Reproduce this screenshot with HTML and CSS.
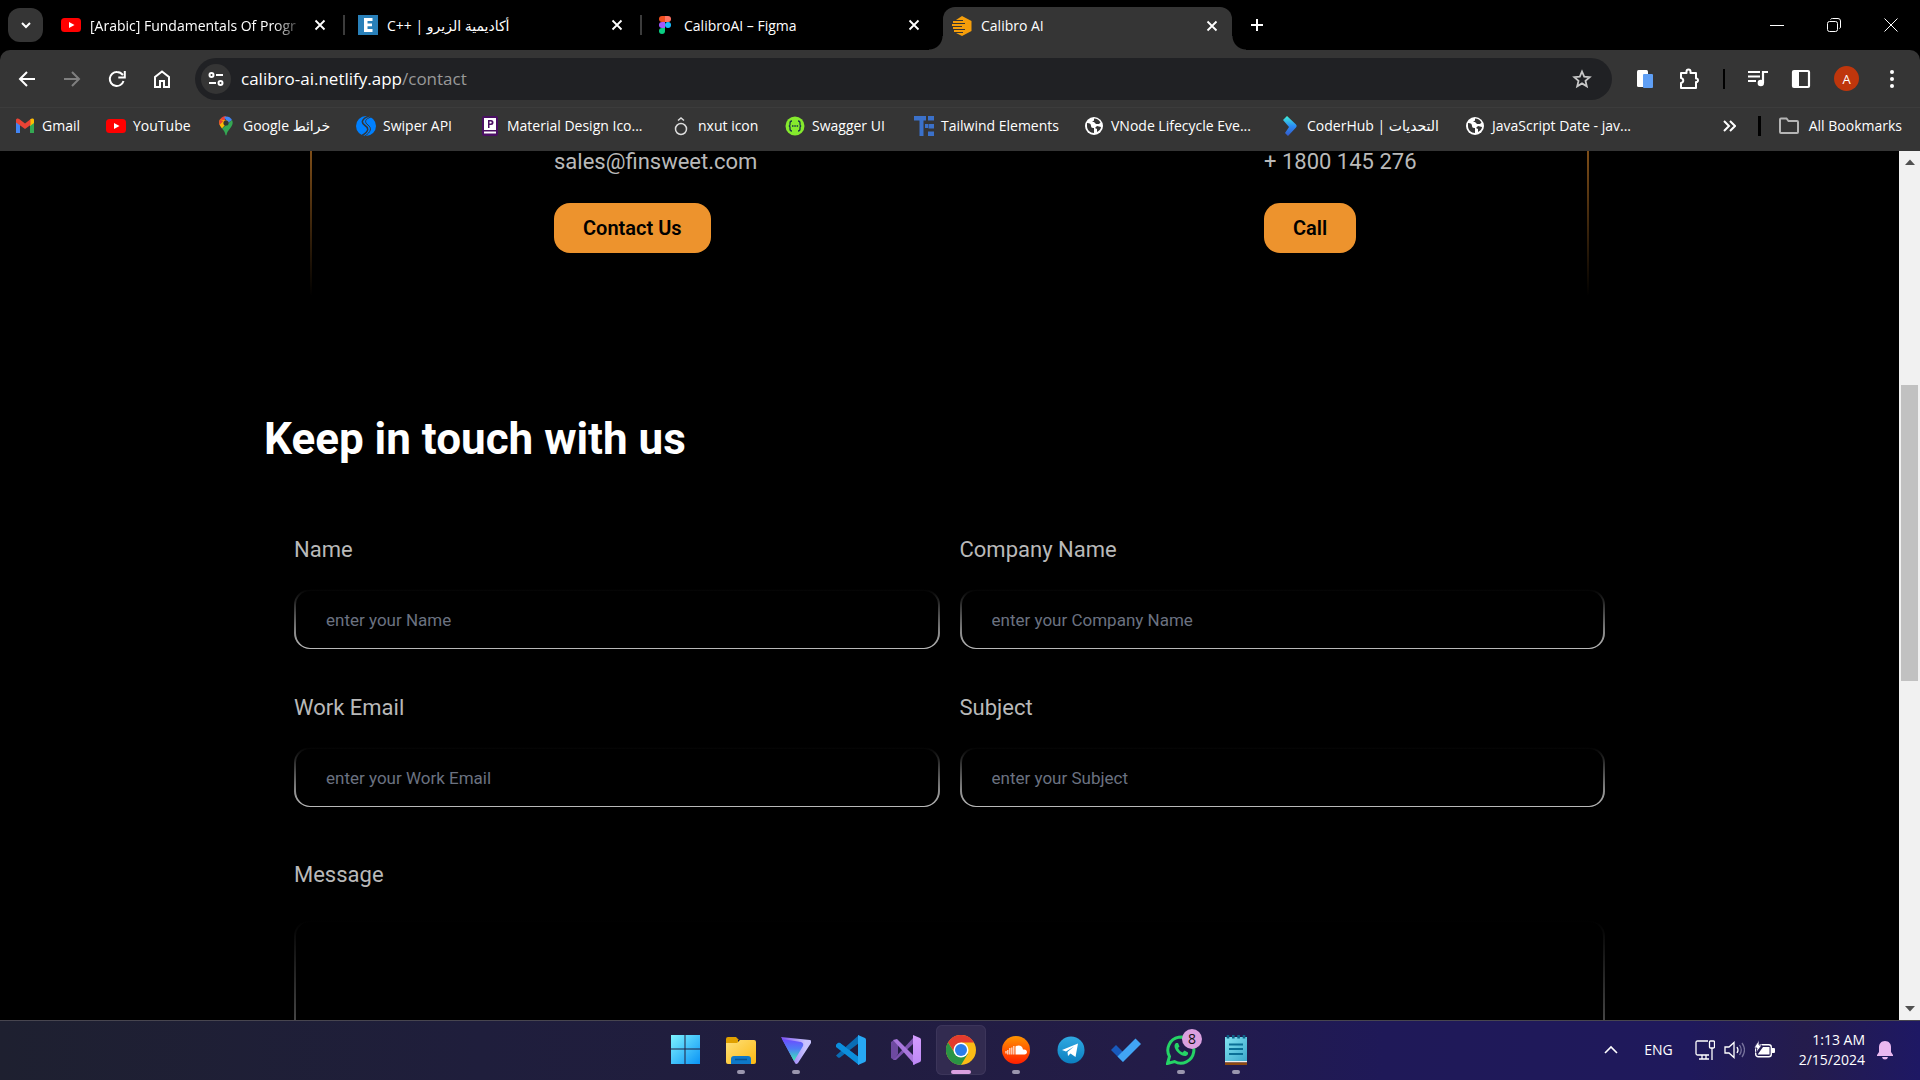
FILE: index.html
```html
<!DOCTYPE html>
<html lang="en">
<head>
<meta charset="utf-8">
<meta name="viewport" content="width=device-width, initial-scale=1">
<title>Calibro AI</title>
<link rel="stylesheet" href="styles.css">
</head>
<body>
<svg class="defs" width="0" height="0" aria-hidden="true">
  <defs>
    <linearGradient id="gWin" x1="0" y1="0" x2="1" y2="1"><stop offset="0" stop-color="#7df3ff"/><stop offset="1" stop-color="#0a93f5"/></linearGradient>
    <linearGradient id="gFold" x1="0" y1="0" x2="1" y2="1"><stop offset="0" stop-color="#ffe07a"/><stop offset="1" stop-color="#fbb911"/></linearGradient>
    <linearGradient id="gProt" x1="0" y1="0" x2="0" y2="1"><stop offset="0" stop-color="#6d4aff"/><stop offset=".45" stop-color="#4f7df5"/><stop offset="1" stop-color="#3af0b0"/></linearGradient>
    <linearGradient id="gProtE" x1="0" y1="0" x2="1" y2="0"><stop offset="0" stop-color="#7a50f0"/><stop offset=".8" stop-color="#c9c4ff"/></linearGradient>
    <linearGradient id="gSc" x1="0" y1="0" x2="0" y2="1"><stop offset="0" stop-color="#ff9500"/><stop offset="1" stop-color="#ff1e00"/></linearGradient>
    <linearGradient id="gTg" x1="0" y1="0" x2="0" y2="1"><stop offset="0" stop-color="#2fa9e2"/><stop offset="1" stop-color="#0b7fc0"/></linearGradient>
    <linearGradient id="gNote" x1="0" y1="0" x2="1" y2="1"><stop offset="0" stop-color="#83e4f2"/><stop offset="1" stop-color="#3ba8cc"/></linearGradient>
    <linearGradient id="gVs" x1="0" y1="0" x2="0" y2="1"><stop offset="0" stop-color="#d59dff"/><stop offset="1" stop-color="#bd88f5"/></linearGradient>
    <linearGradient id="gHub" x1="0" y1="0" x2="0" y2="1"><stop offset="0" stop-color="#3ff0d8"/><stop offset=".5" stop-color="#2b8df5"/><stop offset="1" stop-color="#3558c8"/></linearGradient>
    <symbol id="x" viewBox="0 0 12 12"><path d="M1.5 1.5l9 9M10.500 1.500l-9 9" fill="none" stroke="#fff" stroke-width="1.800"/></symbol>
    <symbol id="yt" viewBox="0 0 20 20"><rect y="3" width="20" height="14" rx="3.500" fill="#f00"/><path d="M8 7l5.500 3L8 13z" fill="#fff"/></symbol>
    <symbol id="globe" viewBox="0 0 20 20"><circle cx="10" cy="10" r="9" fill="#fff"/><path d="M3 7c3 0 4 1 4 3s2 2 3 2v5c-4 0-7-3-7-7zM10 2.500v2L8 6h2l2 2h3l1.500-1.500C15 4 13 2.500 10 2.500zM17 11l-4-1-2 2 2 1v3c2-1 4-3 4-5z" fill="#353535"/></symbol>
  </defs>
</svg>

<header class="browser">
  <div class="tabstrip">
    <button class="tab-search" aria-label="Search tabs"><svg width="12" height="12" viewBox="0 0 12 12"><path d="M2 4l4 4 4-4" fill="none" stroke="#fff" stroke-width="2"/></svg></button>
    <div class="tabs">
      <div class="tab">
        <svg class="ico"><use href="#yt"/></svg>
        <span class="tab-title fade">[Arabic] Fundamentals Of Progr</span>
        <button class="close" aria-label="Close tab"><svg width="12" height="12"><use href="#x"/></svg></button>
      </div>
      <div class="tab">
        <svg class="ico" viewBox="0 0 20 20"><rect width="20" height="20" fill="#2980b9"/><path d="M6 3h8.500v3H9.500v2.500H14v2.800H9.500V14h5v3H6z" fill="#fff"/></svg>
        <span class="tab-title">C++ | أكاديمية الزيرو</span>
        <button class="close" aria-label="Close tab"><svg width="12" height="12"><use href="#x"/></svg></button>
      </div>
      <div class="tab last">
        <svg class="ico" viewBox="0 0 20 20"><path d="M10 1H7a3 3 0 000 6h3z" fill="#f24e1e"/><path d="M10 1h3a3 3 0 010 6h-3z" fill="#ff7262"/><path d="M10 7H7a3 3 0 000 6h3z" fill="#a259ff"/><circle cx="13" cy="10" r="3" fill="#1abcfe"/><path d="M10 13H7a3 3 0 103 3z" fill="#0acf83"/></svg>
        <span class="tab-title">CalibroAI – Figma</span>
        <button class="close" aria-label="Close tab"><svg width="12" height="12"><use href="#x"/></svg></button>
      </div>
      <div class="tab active">
        <svg class="ico" viewBox="0 0 20 20"><path d="M10 0l9.500 5v10L10 20l-6-3h7v-1H2v-2h11v-1H1v-2h9v-1H0V8h13V7H1V5h10V4H4z" fill="#f59e0b"/></svg>
        <span class="tab-title">Calibro AI</span>
        <button class="close" aria-label="Close tab"><svg width="12" height="12"><use href="#x"/></svg></button>
      </div>
    </div>
    <button class="new-tab" aria-label="New tab"><svg width="14" height="14" viewBox="0 0 14 14"><path d="M7 1v12M1 7h12" stroke="#fff" stroke-width="2"/></svg></button>
    <div class="window-controls">
      <button aria-label="Minimize"><svg width="14" height="14" viewBox="0 0 14 14"><path d="M0 7.500h14" stroke="#fff"/></svg></button>
      <button aria-label="Restore"><svg width="14" height="14" viewBox="0 0 14 14"><rect x=".5" y="3.500" width="10" height="10" rx="2" fill="none" stroke="#fff"/><path d="M3.500 1.500q.5-1 2-1H11q2.500 0 2.500 2.500v6q0 1-1 1.500" fill="none" stroke="#fff"/></svg></button>
      <button aria-label="Close"><svg width="14" height="14" viewBox="0 0 14 14"><path d="M.5.5l13 13M13.500.5l-13 13" stroke="#fff"/></svg></button>
    </div>
  </div>

  <div class="toolbar">
    <nav class="nav-buttons" aria-label="Navigation">
      <button aria-label="Back"><svg width="18" height="18" viewBox="0 0 18 18"><path d="M17 9H3M9 2L2 9l7 7" fill="none" stroke="#fff" stroke-width="2"/></svg></button>
      <button aria-label="Forward"><svg width="18" height="18" viewBox="0 0 18 18"><path d="M1 9h14M9 2l7 7-7 7" fill="none" stroke="#7f7f7f" stroke-width="2"/></svg></button>
      <button aria-label="Reload"><svg width="18" height="18" viewBox="0 0 18 18"><path d="M15.500 11A7 7 0 119 2c2.500 0 4.500 1.200 6 3" fill="none" stroke="#fff" stroke-width="2"/><path d="M16.800 1v6.500h-6.500" fill="none" stroke="#fff" stroke-width="2"/></svg></button>
      <button aria-label="Home"><svg width="18" height="18" viewBox="0 0 18 18"><path d="M2 17V7l7-5.500L16 7v10h-5v-6H7v6z" fill="none" stroke="#fff" stroke-width="2"/></svg></button>
    </nav>
    <div class="omnibox">
      <button class="site-info" aria-label="View site information"><svg width="16" height="16" viewBox="0 0 16 16" fill="none" stroke="#fff" stroke-width="2"><circle cx="3.500" cy="4" r="2"/><path d="M8 4h7M1 12h7"/><circle cx="12.500" cy="12" r="2"/></svg></button>
      <a class="url" href="#">calibro-ai.netlify.app<span>/contact</span></a>
      <button class="star" aria-label="Bookmark this tab"><svg width="20" height="20" viewBox="0 0 20 20"><path d="M10 2.500l2.200 5.200 5.500.5-4.200 3.700 1.300 5.400-4.800-2.900-4.800 2.900 1.300-5.400L2.300 8.200l5.500-.5z" fill="none" stroke="#c8c8c8" stroke-width="1.800"/></svg></button>
    </div>
    <div class="actions">
      <button aria-label="Extension"><svg width="20" height="20" viewBox="0 0 20 20"><rect x="2" y="1" width="11" height="17" rx="1.500" fill="#fff"/><rect x="8" y="5" width="10" height="14" rx="1" fill="#5f9ff5"/></svg></button>
      <button aria-label="Extensions"><svg width="22" height="22" viewBox="0 0 22 22"><path d="M3 5h5.500V3.500a2 2 0 014 0V5H18v5.500h1a2 2 0 010 3.500h-1v6H3v-5c3-.5 3-4.500 0-5z" fill="none" stroke="#fff" stroke-width="2" stroke-linejoin="round"/></svg></button>
      <span class="rule"></span>
      <button aria-label="Media"><svg width="20" height="20" viewBox="0 0 20 20"><path d="M0 3h12M0 7.500h12M0 12h8M15 14V3h5" fill="none" stroke="#fff" stroke-width="2.200"/><circle cx="12.800" cy="14" r="3.200" fill="#fff"/></svg></button>
      <button aria-label="Side panel"><svg width="20" height="20" viewBox="0 0 20 20"><rect x="2" y="2" width="16" height="16" rx="1" fill="none" stroke="#fff" stroke-width="2.200"/><path d="M2 2h6v16H2z" fill="#fff"/></svg></button>
      <button class="avatar" aria-label="Profile">A</button>
      <button aria-label="Menu"><svg width="20" height="20" viewBox="0 0 20 20" fill="#fff"><circle cx="10" cy="3" r="2"/><circle cx="10" cy="10" r="2"/><circle cx="10" cy="17" r="2"/></svg></button>
    </div>
  </div>

  <nav class="bookmarks" aria-label="Bookmarks">
    <a href="#"><svg class="ico" viewBox="0 0 20 20"><path d="M1 4v13h4V8z" fill="#4285f4"/><path d="M15 8v9h4V4z" fill="#34a853"/><path d="M15 5v5l4-3V4c0-1.500-2-2-4-.5z" fill="#fbbc04"/><path d="M1 4c0-1.500 2-2 3.500-.8L10 7.500l5.500-4.300V9L10 13 4.500 9 1 6.500z" fill="#ea4335"/></svg>Gmail</a>
    <a href="#"><svg class="ico"><use href="#yt"/></svg>YouTube</a>
    <a href="#"><svg class="ico" viewBox="0 0 20 20"><path d="M10 0a7 7 0 00-6 3.500L8 7z" fill="#ea4335"/><path d="M8 1a7 7 0 018 3l-4 3z" fill="#4285f4"/><path d="M4 3.500C2 7 4 10 6 12.500L12.500 5z" fill="#fbbc04"/><path d="M16 4c2.500 5-2.500 8-5 13q-1 5-2 0c-.5-2-2-3-3-4.500z" fill="#34a853"/><path d="M3.800 3.500Q2.500 6 3.500 9L7.500 5z" fill="#ea4335"/><circle cx="10" cy="7" r="2.600" fill="#353535"/></svg>Google خرائط</a>
    <a href="#"><svg class="ico" viewBox="0 0 20 20"><circle cx="10" cy="10" r="10" fill="#0080ff"/><path d="M13 0C5 3 5 7 9 9.500s4 6-3 10" fill="none" stroke="#353535" stroke-width="1.500"/><path d="M15 1c-6 2-7 5-3 8s3 7-3 11" fill="none" stroke="#353535" stroke-width="1"/></svg>Swiper API</a>
    <a href="#"><svg class="ico" viewBox="0 0 20 20"><rect x="2" y="0" width="16" height="20" rx="2" fill="#4a0f63"/><path d="M4 2h12v12H4zM4 15.500h12v2H4z" fill="#fff"/><path d="M8 4h3a2.500 2.500 0 010 5H9.500v3H8zM9.500 5.500v2h1.200a1 1 0 000-2z" fill="#4a0f63"/></svg>Material Design Ico...</a>
    <a href="#"><svg class="ico" viewBox="0 0 20 20" fill="none" stroke="#ddd" stroke-width="1.500"><circle cx="10" cy="13" r="5.500"/><path d="M7 4.500L10 2l3 2.500"/></svg>nxut icon</a>
    <a href="#"><svg class="ico" viewBox="0 0 20 20"><circle cx="10" cy="10" r="9.500" fill="#85ea2d"/><path d="M7 5q-2 0-2 2v1.500Q5 10 3.800 10 5 10 5 11.500V13q0 2 2 2M13 5q2 0 2 2v1.500q0 1.500 1.200 1.500-1.200 0-1.200 1.500V13q0 2-2 2" fill="none" stroke="#173647" stroke-width="1.300"/><path d="M7 10h1.500M9.300 10h1.500M11.600 10h1.500" stroke="#173647" stroke-width="1.500"/></svg>Swagger UI</a>
    <a href="#"><svg class="ico" viewBox="0 0 20 20" fill="#3b71ca"><path d="M0 0h12v4.500H9.500V20h-4V4.500H0zM14 0h6v4.500h-6zM11 8h3v4h-3zM14.500 8H20v4.500h-5.500zM14 15.500h6V20h-6z"/></svg>Tailwind Elements</a>
    <a href="#"><svg class="ico"><use href="#globe"/></svg>VNode Lifecycle Eve...</a>
    <a href="#"><svg class="ico" viewBox="0 0 20 20"><path d="M7 0l9 8.500q1.500 1.500 0 3L8 20l-3-3 4-6-6-7z" fill="url(#gHub)"/></svg>CoderHub | التحديات</a>
    <a href="#"><svg class="ico"><use href="#globe"/></svg>JavaScript Date - jav...</a>
    <button class="more" aria-label="More bookmarks"><svg width="14" height="12" viewBox="0 0 14 12"><path d="M2 1l5 5-5 5M8 1l5 5-5 5" fill="none" stroke="#fff" stroke-width="2"/></svg></button>
    <span class="rule thick"></span>
    <a class="all" href="#"><svg class="ico" viewBox="0 0 20 20"><path d="M1 16V3.500q0-1 1-1h5.500l2 2.500H18q1 0 1 1v10q0 1-1 1H2q-1 0-1-1z" fill="none" stroke="#b5b5b5" stroke-width="2"/></svg>All Bookmarks</a>
  </nav>
</header>

<div class="viewport">
  <main class="page">
    <section class="contact-card">
      <div>
        <p>sales@finsweet.com</p>
        <button class="cta">Contact Us</button>
      </div>
      <div>
        <p>+ 1800 145 276</p>
        <button class="cta">Call</button>
      </div>
    </section>
    <section class="touch">
      <h1>Keep in touch with us</h1>
      <form class="form">
        <div class="field"><label for="name">Name</label><input id="name" type="text" placeholder="enter your Name"></div>
        <div class="field"><label for="company">Company Name</label><input id="company" type="text" placeholder="enter your Company Name"></div>
        <div class="field"><label for="email">Work Email</label><input id="email" type="email" placeholder="enter your Work Email"></div>
        <div class="field"><label for="subject">Subject</label><input id="subject" type="text" placeholder="enter your Subject"></div>
        <div class="field wide"><label for="message">Message</label><textarea id="message"></textarea></div>
      </form>
    </section>
  </main>
  <div class="scrollbar" aria-hidden="true">
    <svg width="10" height="6" viewBox="0 0 10 6"><path d="M0 6l5-5.500L10 6z" fill="#505050"/></svg>
    <div class="track"><div class="thumb"></div></div>
    <svg width="10" height="6" viewBox="0 0 10 6"><path d="M0 0l5 5.500L10 0z" fill="#505050"/></svg>
  </div>
</div>

<footer class="taskbar">
  <span></span>
  <div class="apps">
    <button aria-label="Start"><svg viewBox="1 1 30 30"><path d="M1 1h13.500v13.500H1zM15.500 1H30v13.500H15.500zM1 15.500h13.500V30H1zM15.500 15.500H30V30H15.500z" fill="url(#gWin)"/></svg></button>
    <button class="open" aria-label="File Explorer"><svg viewBox="0 0 30 30"><path d="M0 4q0-2 2-2h8l3 3h-1v6H0z" fill="#e0a000"/><path d="M0 8h11l3-3h14q2 0 2 2v20q0 2-2 2H2q-2 0-2-2z" fill="url(#gFold)"/><path d="M5 29v-5q0-3 3-3h14q3 0 3 3v5z" fill="#0e78c8"/><path d="M9 24.500h12" stroke="#075493" stroke-width="1.500"/></svg></button>
    <button class="open" aria-label="Proton VPN"><svg viewBox="0 0 30 30"><path d="M0 2l29 3q2 1 1 3L17 28q-2 2-3 0z" fill="url(#gProtE)"/><path d="M1 4l19 3q3 1 2 4l-9 15z" fill="url(#gProt)"/></svg></button>
    <button aria-label="Visual Studio Code"><svg viewBox="0 0 30 30"><path d="M0 10l2-2q1-.7 2 0l19 14.500V30z" fill="#0a7fcb"/><path d="M0 20.500l2 2q1 .7 2 0L23 8V0z" fill="#0a6cb4"/><path d="M0 10l2-2q1-.7 2 0l19 14.500V30L0 12z" fill="#0c8edc"/><path d="M22 0l7 3q1 .5 1 2v20q0 1.500-1 2l-7 3z" fill="#27a8f4"/></svg></button>
    <button aria-label="Visual Studio"><svg viewBox="0 0 30 30"><path d="M0 7l3-2v20l-3-2zM3 5l4 5v9l-4 6-1-1V6z" fill="#6d4aa0"/><path d="M2 25l20-22v6L5 25z" fill="#7b52ae"/><path d="M2 5l4-1 18 18v8z" fill="#a877dc"/><path d="M22 0l7 3q1 .5 1 2v20q0 1.500-1 2l-7 3z" fill="url(#gVs)"/></svg></button>
    <button class="open current" aria-label="Google Chrome"><svg viewBox="0 0 30 30"><circle cx="15" cy="15" r="15" fill="#fbbc15"/><path d="M2 7.500A15 15 0 0128 7.500H15L9 18z" fill="#e33b2e"/><path d="M2 7.500A15 15 0 0015 30l7-11.500-13 0z" fill="#2a9444"/><circle cx="15" cy="15" r="7.500" fill="#fff"/><circle cx="15" cy="15" r="6" fill="#2b7de9"/></svg></button>
    <button class="open" aria-label="SoundCloud"><svg viewBox="0 0 30 30"><circle cx="15" cy="15" r="14" fill="url(#gSc)"/><path d="M14.500 19.500V11.500c3-2 7-1 7.500 3 5-1 5 5 1.500 5z" fill="#fff"/><path d="M12.800 11v8.500M10.800 12.500v7M8.800 13v6.500M6.800 15v4.500M5 16v2.500" stroke="#fff" stroke-width="1.300" opacity=".8"/></svg></button>
    <button aria-label="Telegram"><svg viewBox="0 0 30 30"><circle cx="15" cy="15" r="13.500" fill="url(#gTg)"/><path d="M6 15l16-6.500L19.500 22l-5-3.500-2.500 2.500-.5-4L18 11.500l-8 5z" fill="#fff"/></svg></button>
    <button aria-label="Microsoft To Do"><svg viewBox="0 0 30 30"><path d="M0 15l5-5 8 8-1 9z" fill="#185abd"/><path d="M6.500 21.500L24.500 3.500 30 9 12 27z" fill="#41a5f5"/></svg></button>
    <button class="open" aria-label="WhatsApp"><svg viewBox="0 0 30 30"><path d="M1.500 28.500l2-7A13 13 0 118.500 26.500z" fill="none" stroke="#25d366" stroke-width="3"/><path d="M10 8c-3 2-1 7 2.500 10s8 4.500 9.500 1v-1.500L18.500 15.500 16.500 17.500q-3-1-4.500-4.500l1.500-1.500L12 8z" fill="#25d366"/></svg><span class="badge">8</span></button>
    <button class="open" aria-label="Notepad"><svg viewBox="0 0 30 30"><path d="M4 2h22v24H4z" fill="url(#gNote)"/><path d="M4 26h22v1.500H4z" fill="#eee"/><path d="M4 27.500h22V30H4z" fill="#8f4a10"/><path d="M8 9.500h14M8 14h14M8 19h14" stroke="#0a6f96" stroke-width="2"/><path d="M7 0v3.500M12.300 0v3.500M17.600 0v3.500M23 0v3.500" stroke="#0e6288" stroke-width="2.600"/></svg></button>
  </div>
  <div class="tray">
    <button aria-label="Show hidden icons"><svg width="14" height="14" viewBox="0 0 14 14"><path d="M1 10l6-6 6 6" fill="none" stroke="#fff" stroke-width="1.600"/></svg></button>
    <span class="lang">ENG</span>
    <div class="status">
      <svg width="20" height="20" viewBox="0 0 20 20" fill="none" stroke="#fff" stroke-width="1.300"><path d="M13 1H2.500Q1 1 1 2.500v11Q1 15 2.500 15H14M4 19h10M7 15v4M11 15v4M17 8v12"/><rect x="14.500" y="1" width="5" height="7" rx="1"/></svg>
      <svg width="21" height="20" viewBox="0 0 21 20" fill="none" stroke="#fff" stroke-width="1.300"><path d="M1 7h4l5-4.500v15L5 13H1z"/><path d="M13 7q2 3 0 6"/><path d="M15.500 5q3.500 5 0 10M18 3q5 7 0 14" stroke="#77739c"/></svg>
      <svg width="21" height="20" viewBox="0 0 21 20"><rect x="1.700" y="4.700" width="15.600" height="12" rx="2.500" fill="none" stroke="#fff" stroke-width="1.400"/><path d="M18 8h2q1 0 1 1v3q0 1-1 1h-2z" fill="#fff"/><path d="M4 14l5-7h6.500v7.500H4z" fill="#fff"/><path d="M5 0L0 8h3l-1 5 6-8H5z" fill="#fff" stroke="#241b55" stroke-width=".8"/></svg>
    </div>
    <time class="clock">1:13 AM<br>2/15/2024</time>
    <svg width="16" height="20" viewBox="0 0 16 20"><path d="M8 1c4 0 6 3 6 6v5l2 3v1H0v-1l2-3V7c0-3 2-6 6-6zM5 17h6q-.5 2.500-3 2.500T5 17z" fill="#eab8f0"/></svg>
  </div>
</footer>
</body>
</html>
```
FILE: styles.css
```css
* { box-sizing: border-box; }

body {
  margin: 0;
  height: 100vh;
  display: flex;
  flex-direction: column;
  overflow: hidden;
  background: #000;
  color: #fff;
  font-family: "Open Sans", "Noto Sans", "DejaVu Sans", sans-serif;
  font-size: 14px;
}

button {
  padding: 0;
  border: 0;
  background: none;
  color: inherit;
  font: inherit;
}

a { color: inherit; text-decoration: none; }
svg { display: block; flex: none; }
.defs { position: absolute; }
.ico { width: 20px; height: 20px; }

/* Tab strip */
.tabstrip {
  display: flex;
  align-items: center;
  height: 50px;
  padding-left: 8px;
}
.tab-search {
  display: grid;
  place-items: center;
  width: 35px;
  height: 34px;
  margin-right: 5px;
  border-radius: 12px;
  background: #353535;
}
.tabs {
  flex: 0 1 1188px;
  display: grid;
  grid-template-columns: repeat(4, 1fr);
  align-self: stretch;
}
.tab {
  position: relative;
  display: flex;
  align-items: center;
  gap: 9px;
  min-width: 0;
  padding: 0 19px 0 13px;
}
.tab:not(.active):not(.last)::after {
  content: "";
  position: absolute;
  right: 0;
  top: 15px;
  width: 2px;
  height: 20px;
  background: #3c3c3c;
}
.tab-title {
  flex: 1;
  min-width: 0;
  overflow: hidden;
  white-space: nowrap;
}
.fade { mask-image: linear-gradient(to right, #000 85%, transparent); }
.active {
  height: 43px;
  margin: 7px 4px 0;
  padding: 0 14px 6px 9px;
  border-radius: 12px 12px 0 0;
  background: #353535;
}
.active::before,
.active::after {
  content: "";
  position: absolute;
  bottom: 0;
  width: 14px;
  height: 14px;
}
.active::before { right: 100%; background: radial-gradient(circle at 0 0, transparent 13px, #353535 14px); }
.active::after { left: 100%; background: radial-gradient(circle at 100% 0, transparent 13px, #353535 14px); }
.new-tab { margin-left: 14px; }
.window-controls { display: flex; gap: 43px; margin-left: auto; padding-right: 22px; }

/* Toolbar */
.toolbar {
  display: flex;
  align-items: center;
  height: 58px;
  border-bottom: 1px solid #3c3c3c;
  border-radius: 10px 10px 0 0;
  background: #353535;
  padding: 0 18px;
}
.nav-buttons { display: flex; gap: 27px; margin-right: 24px; }
.omnibox {
  flex: 1;
  display: flex;
  align-items: center;
  height: 42px;
  padding: 0 20px 0 6px;
  border-radius: 21px;
  background: #202124;
}
.site-info {
  display: grid;
  place-items: center;
  width: 30px;
  height: 30px;
  border-radius: 50%;
  background: #353535;
}
.url { flex: 1; margin-left: 10px; font-size: 17px; }
.url span { color: #999; }
.actions { display: flex; align-items: center; gap: 23px; margin-left: 23px; }
.rule { width: 2px; height: 20px; background: #000; }
.thick { width: 3px; }
.avatar {
  width: 25px;
  height: 25px;
  border-radius: 50%;
  background: #bf360c;
  font-size: 13px;
}

/* Bookmarks bar */
.bookmarks {
  display: grid;
  grid-template-columns: 91px 110px 140px 124px 191px 114px 129px 170px 196px 185px 190px 1fr 21px auto;
  align-items: center;
  height: 43px;
  padding: 0 18px 8px 15px;
  background: #353535;
  white-space: nowrap;
}
.bookmarks a { display: flex; align-items: center; gap: 7px; }
.bookmarks .more { justify-self: end; margin-right: 22px; }
.bookmarks .all { gap: 10px; }

/* Page */
.viewport { flex: 1; display: flex; min-height: 0; overflow: hidden; }
.page {
  flex: 1;
  overflow: hidden;
  font-family: Roboto, sans-serif;
  font-size: 22px;
  color: #b9b9b9;
}
.contact-card {
  display: grid;
  grid-template-columns: 710fr 323fr;
  max-width: 1279px;
  margin: 0 auto;
  padding: 0 0 42px 242px;
  border: solid transparent;
  border-width: 0 2px;
  border-image: linear-gradient(#7f4e18, #000) 1;
}
.contact-card p { margin: 0 0 30px; line-height: 22px; }
.cta {
  height: 50px;
  padding: 0 29px;
  border-radius: 16px;
  background: #ed932d;
  color: #000;
  font-size: 20px;
  font-weight: 600;
}
.touch { max-width: 1371px; margin: 118px auto 0; }
.touch h1 {
  margin: 0 0 70px;
  color: #fff;
  font-size: 44px;
  font-weight: 700;
  line-height: 52px;
}
.form {
  display: grid;
  grid-template-columns: 1fr 1fr;
  gap: 44px 20px;
  padding: 0 30px;
}
.field { display: flex; flex-direction: column; gap: 24px; }
.field label { line-height: 30px; }
.wide { grid-column: 1 / -1; padding-top: 9px; gap: 30px; }
.field input,
.field textarea {
  width: 100%;
  border: 2px solid transparent;
  border-bottom-width: 1px;
  border-radius: 16px;
  background:
    linear-gradient(#000, #000) padding-box,
    linear-gradient(#000, #bababa) border-box;
  color: #fff;
  font-family: inherit;
  font-size: 17px;
}
.field input { height: 60px; padding: 0 30px; }
.field textarea { height: 270px; padding: 30px; resize: none; }
.field input::placeholder { color: #6b7280; }

.scrollbar {
  width: 21px;
  display: flex;
  flex-direction: column;
  align-items: center;
  padding: 8px 0;
  background: #f1f1f1;
}
.track { flex: 1; width: 17px; padding-top: 220px; }
.thumb { height: 296px; background: #c1c1c1; }

/* Taskbar */
.taskbar {
  display: grid;
  grid-template-columns: 1fr auto 1fr;
  align-items: center;
  height: 60px;
  padding-bottom: 2px;
  border-top: 1px solid #47454f;
  background: linear-gradient(to right, #1e2030 0%, #1f1e3c 25%, #211d40 45%, #231c48 60%, #1f1958 72%, #1f195c 88%, #241c4c 94%, #1e1864 100%);
}
.apps { display: flex; gap: 5px; padding-left: 2px; }
.apps button {
  position: relative;
  display: grid;
  place-items: center;
  width: 50px;
  height: 50px;
  border-radius: 6px;
}
.apps svg { width: 30px; height: 30px; }
.apps .current { background: #322b50; box-shadow: inset 0 0 0 1px #3c355a; }
.open::after {
  content: "";
  position: absolute;
  bottom: 1px;
  width: 8px;
  height: 4px;
  border-radius: 2px;
  background: #9a96ae;
}
.current::after { width: 20px; background: #dba0e0; }
.badge {
  position: absolute;
  top: 4px;
  right: 4px;
  width: 20px;
  height: 20px;
  border-radius: 50%;
  background: #dba0e0;
  color: #111;
  font-size: 14px;
  line-height: 20px;
  text-align: center;
}
.tray {
  display: flex;
  align-items: center;
  justify-content: flex-end;
  padding-right: 27px;
}
.lang { margin: 0 22px 0 26px; }
.status { display: flex; gap: 9px; margin-right: 24px; }
.clock { margin-right: 12px; line-height: 20px; text-align: right; }
```
